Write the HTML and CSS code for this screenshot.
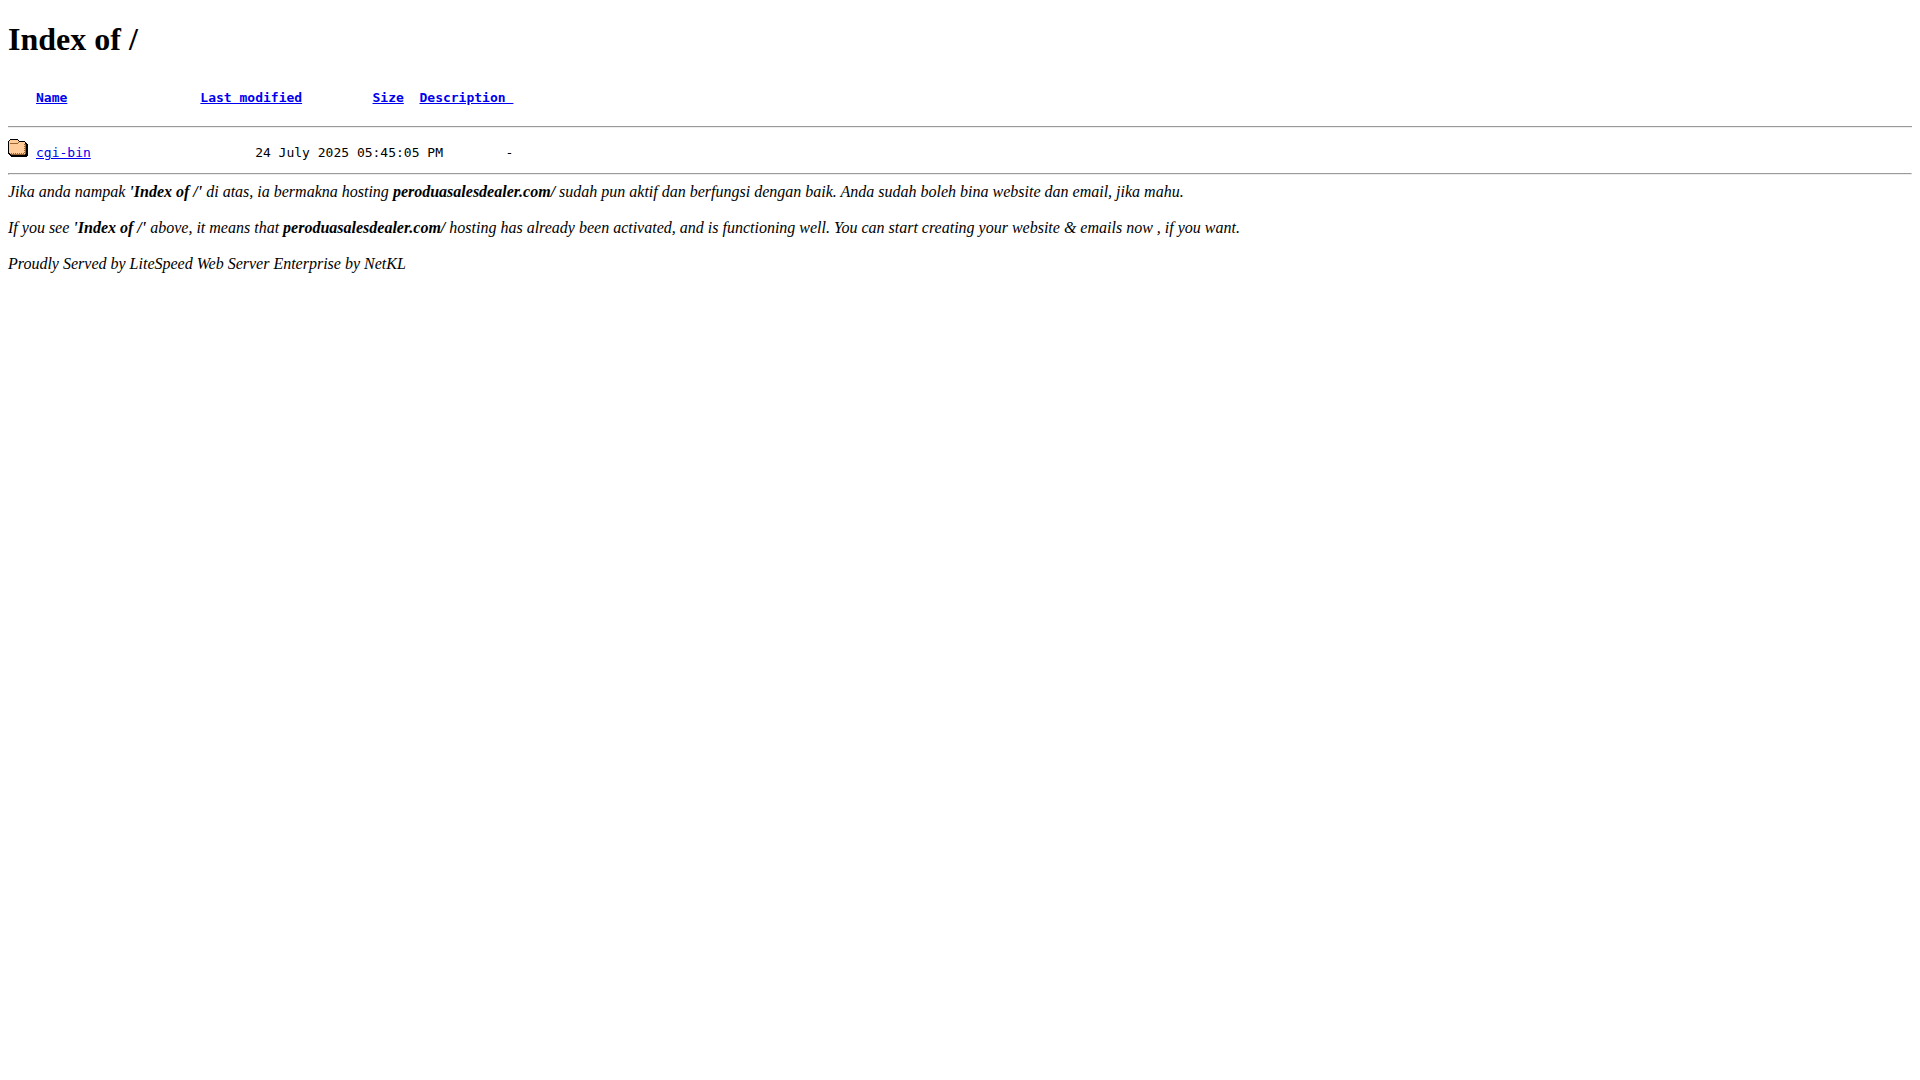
FILE: index.html
```
<!DOCTYPE html>
<html lang="ms">
<head>
    <meta charset="UTF-8">
    <meta name="viewport" content="width=device-width, initial-scale=1.0">
    <title>Index of /</title>
    <link rel="stylesheet" href="styles.css">
</head>
<body>

<h1>Index of /</h1>

<table class="listing">
    <thead>
        <tr class="row head">
            <td class="icon"></td>
            <th class="name"><a href="?N=D">Name</a></th>
            <th class="modified"><a href="?M=A">Last modified</a></th>
            <th class="size"><a href="?S=A">Size</a></th>
            <th class="description"><a href="?D=A">Description </a></th>
        </tr>
    </thead>
    <tbody>
        <tr class="row">
            <td class="icon">
                <svg width="20" height="22" viewBox="0 0 20 22" shape-rendering="crispEdges" role="img" aria-label="[DIR]">
                    <path fill="#000" d="M2 3h8v1h1v1h6v1h1v1h1v1h1v12h-1v1H3v-1H2v-1H1v-1H0V5h1V4h1z"/>
                    <path fill="#996633" d="M3 18h14v1H3zM17 8h1v10h-1z"/>
                    <path fill="#ffcc99" d="M2 4h8v1h1v1h6v12H2v-1H1V5h1z"/>
                    <path fill="#996633" d="M2 7h8v1H2zM10 6h1v1h-1z"/>
                    <path fill="none" stroke="#996633" stroke-dasharray="1 1" d="M3 17.500h14M16.500 8v9"/>
                </svg>
            </td>
            <td class="name"><a href="/cgi-bin/">cgi-bin</a></td>
            <td class="modified">24 July 2025 05:45:05 PM</td>
            <td class="size">-</td>
            <td class="description"></td>
        </tr>
    </tbody>
</table>
<hr>

<address>
    Jika anda nampak <b>'Index of /'</b> di atas, ia bermakna hosting <b>peroduasalesdealer.com/</b> sudah pun aktif dan berfungsi dengan baik. Anda sudah boleh bina website dan email, jika mahu.<br><br>
    If you see <b>'Index of /'</b> above, it means that <b>peroduasalesdealer.com/</b> hosting has already been activated, and is functioning well. You can start creating your website &amp; emails now , if you want.<br><br>
    Proudly Served by LiteSpeed Web Server Enterprise by NetKL
</address>

</body>
</html>
```

FILE: styles.css
```
body {
    margin: 0;
    padding: 0 8px;
    font-family: "Liberation Serif", "Times New Roman", serif;
    font-size: 16px;
    color: #000;
    background: #fff;
}
h1 {
    margin: 21px 0 23px;
    font-size: 32px;
}
a {
    color: #0000ee;
    white-space: pre;
}
hr {
    margin: 8px 0;
    border: 1px solid;
    border-color: #9a9a9a #eeeeee #eeeeee #9a9a9a;
}
.listing,
.listing thead,
.listing tbody {
    display: block;
}
.listing {
    font-family: "DejaVu Sans Mono", monospace;
    font-size: 13px;
    line-height: 15px;
}
.listing thead {
    padding-bottom: 21px;
    border-bottom: 1px solid #9a9a9a;
}
.listing tbody {
    padding: 8px 0 5px;
    border-top: 1px solid #eeeeee;
}
/* columns are counted in characters */
.row {
    display: flex;
    align-items: flex-end;
    height: 24px;
}
.row th,
.row td {
    padding: 0;
    text-align: left;
    white-space: nowrap;
}
.row .icon {
    width: 28px;
    height: 24px;
}
.icon svg {
    display: block;
}
.name {
    width: 28ch;
}
.modified {
    width: 32ch;
}
.head .name {
    width: 21ch;
}
.head .modified {
    width: 22ch;
}
.head .size {
    width: 6ch;
}
```
